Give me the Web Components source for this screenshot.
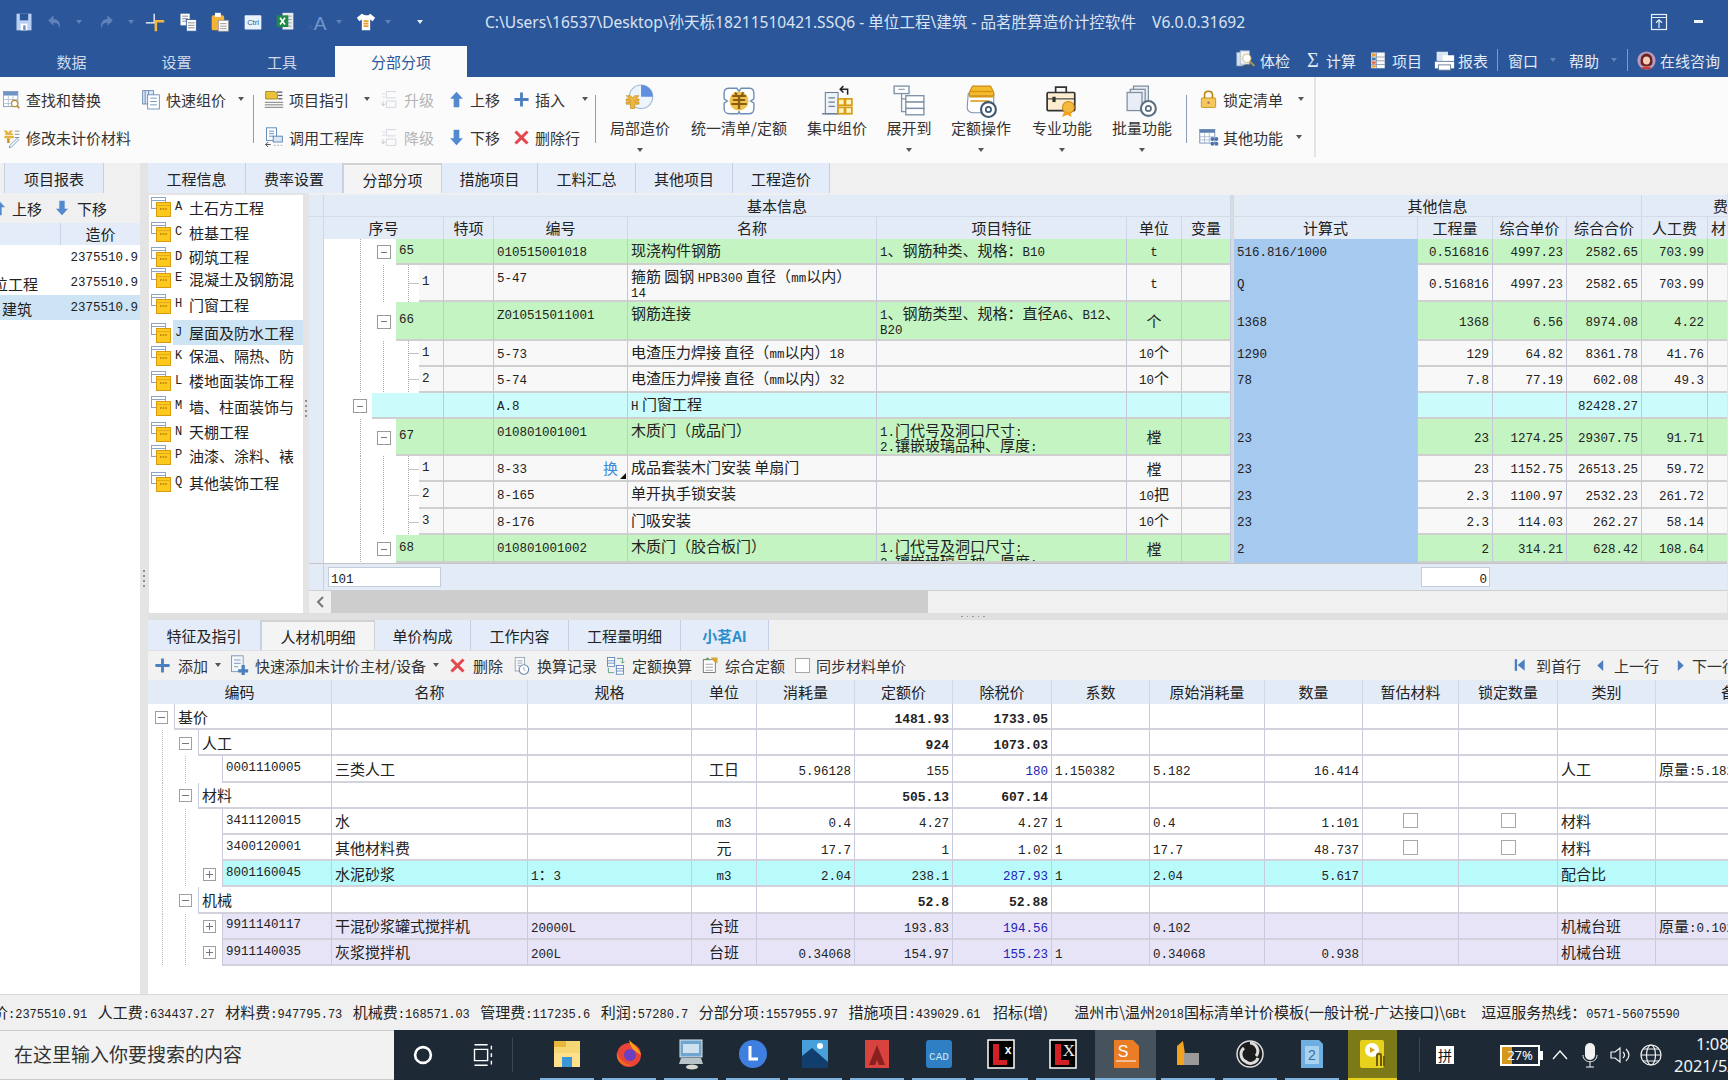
<!DOCTYPE html>
<html lang="zh-CN">
<head>
<meta charset="utf-8">
<title>品茗胜算造价计控软件</title>
<style>
    html, body { margin: 0; width: 1728px; height: 1080px; overflow: hidden; background: #f0f0f0; }
    body { font: 15px "Noto Sans CJK SC", sans-serif; color: #222; }
    #app { display: flex; flex-direction: column; width: 1728px; height: 1080px; }
    #centro { display: flex; height: 831px; background: #e4e4e4; }
    #derecha { width: 1580px; display: flex; flex-direction: column; }
    #medio { display: flex; height: 420px; background: #e4e4e4; }
</style>
</head>
<body>
<div id="app">
    <title-bar></title-bar>
    <rib-bar></rib-bar>
    <div id="centro">
        <left-panel></left-panel>
        <v-split w="8"></v-split>
        <div id="derecha">
            <tab-strip h="30" pad="0">
                <tab-item w="98">工程信息</tab-item>
                <tab-item w="97">费率设置</tab-item>
                <tab-item w="99" active>分部分项</tab-item>
                <tab-item w="96">措施项目</tab-item>
                <tab-item w="98">工料汇总</tab-item>
                <tab-item w="97">其他项目</tab-item>
                <tab-item w="97">工程造价</tab-item>
            </tab-strip>
            <div id="medio">
                <part-tree></part-tree>
                <v-split w="6" top="10"></v-split>
                <bill-grid></bill-grid>
            </div>
            <h-split></h-split>
            <detail-panel></detail-panel>
        </div>
    </div>
    <status-bar></status-bar>
    <task-bar></task-bar>
</div>

<script>
const ICONS = {
    save: '<rect x="3" y="2" width="18" height="20" fill="#b9d0f2"/><rect x="7" y="2" width="10" height="8" fill="#2b579a"/><rect x="8" y="14" width="8" height="8" fill="#fff"/><rect x="11" y="16" width="3" height="6" fill="#6f94cc"/>',
    undo: '<path d="M10 3 3 10l7 7v-4c4 0 7 1 8 8 2-7-1-13-8-13z" fill="#5f82b8"/>',
    redo: '<path d="M14 3l7 7-7 7v-4c-4 0-7 1-8 8-2-7 1-13 8-13z" fill="#5f82b8"/>',
    cross: '<path d="M1 13h10V2" fill="none" stroke="#fff" stroke-width="1.500"/><path d="M23 11H13v12" fill="none" stroke="#f6b73c" stroke-width="3"/>',
    copy: '<rect x="3" y="2" width="11" height="14" fill="#fff"/><path d="M5 5h7M5 8h7M5 11h7" stroke="#777"/><rect x="10" y="9" width="12" height="14" fill="#fff" stroke="#2b579a"/><path d="M12 13h8M12 16h8M12 19h8" stroke="#777"/>',
    paste: '<rect x="2" y="4" width="15" height="18" rx="2" fill="#f5b335"/><rect x="6" y="1" width="7" height="5" fill="#fff"/><rect x="10" y="10" width="12" height="13" fill="#fff" stroke="#999"/><path d="M12 14h8M12 17h8M12 20h8" stroke="#888"/>',
    ctrl: '<rect x="2" y="4" width="20" height="17" rx="1" fill="#e9f2fb"/><text x="12" y="16" font-size="9" text-anchor="middle" fill="#2b579a" font-family="Liberation Sans">Ctrl</text>',
    excel: '<rect x="9" y="1" width="13" height="20" fill="#e9ecef"/><path d="M12 5h8M12 9h8M12 13h8M12 17h8" stroke="#8c9aa8"/><rect x="2" y="4" width="14" height="14" fill="#1e8a45"/><path d="M6 7l6 8M12 7l-6 8" stroke="#fff" stroke-width="2"/>',
    aa: '<text x="0" y="21" font-size="11" fill="#3f689f" font-family="Liberation Sans">A</text><text x="8" y="21" font-size="23" fill="#7397cf" font-family="Liberation Sans">A</text>',
    shirt: '<path d="M7 2 1 7l3 4 3-2v13h10V9l3 2 3-4-6-5-2 2h-4z" fill="#fff"/><path d="M9 11h6M9 14h6M9 17h6" stroke="#f39a2a" stroke-width="2"/>',
    find: '<rect x="2" y="2" width="18" height="19" fill="#fff" stroke="#7d93b3"/><rect x="2" y="2" width="18" height="5" fill="#6e93c8"/><path d="M8 7v14M14 7v14M2 12h18M2 17h18" stroke="#a9b9cf"/><circle cx="16" cy="17" r="4" fill="#fff" stroke="#b98a2a" stroke-width="1.5"/><path d="m19 20 3 3" stroke="#b98a2a" stroke-width="2"/>',
    price: '<path d="M2 3h4l2 3 2-3h4l-3 4h3v2H4V7h1z M3 10h12v3H3z" fill="#e4b23e"/><path d="M8 13v6" stroke="#c98f1d" stroke-width="3"/><path d="M16 4h6M16 8h6M16 12h6" stroke="#777"/><path d="m10 22 9-9 2 2-9 9-3 1z" fill="#fff" stroke="#5b84bd"/>',
    quick: '<rect x="2" y="2" width="13" height="16" fill="#dbe7f5" stroke="#5f7fa8"/><path d="M5 2v16M9 2v16" stroke="#5f7fa8"/><rect x="8" y="7" width="14" height="17" fill="#fff" stroke="#5b84bd"/><path d="M11 11h8M11 15h8M11 19h8" stroke="#5b84bd"/>',
    guide: '<path d="M2 3h11l3 3v6H2z" fill="#e9c23c" stroke="#9a7b16"/><rect x="15" y="3" width="7" height="1.5" fill="#555"/><rect x="17" y="7" width="5" height="1.5" fill="#555"/><rect x="17" y="11" width="5" height="1.5" fill="#555"/><path d="M1 16h22M1 19h22M1 22h22" stroke="#666"/>',
    lib: '<rect x="3" y="1" width="12" height="15" fill="#fff" stroke="#4a78b3"/><path d="M6 5h6M6 8h6M6 11h6" stroke="#4a78b3"/><rect x="11" y="11" width="11" height="7" fill="#dbe7f5" stroke="#4a78b3"/><path d="M2 21h6m-3-3-3 3 3 3" stroke="#333" fill="none"/><path d="M12 22h10" stroke="#999" stroke-dasharray="2 2"/>',
    up: '<path d="M12 1 3 11h5v12h8V11h5z" fill="#5389cf"/>',
    down: '<path d="M12 23 3 13h5V1h8v12h5z" fill="#5389cf"/>',
    plus: '<path d="M10 2h4v8h8v4h-8v8h-4v-8H2v-4h8z" fill="#4c7fc0"/>',
    del: '<path d="m5 2 7 7 7-7 3 3-7 7 7 7-3 3-7-7-7 7-3-3 7-7-7-7z" fill="#e2484d"/>',
    lift: '<g fill="none" stroke="#c9ced6"><path d="M8 2h12M8 2v8h12M3 5h3M3 9h3M8 14h12v8H8zM3 18h3"/></g><path d="M4 14v6m-3-3 3 3 3-3" stroke="#c3cad4" fill="none"/>',
    pie: '<circle cx="17" cy="12" r="11" fill="#eef4fb" stroke="#9fb6d3"/><path d="M17 12V1a11 11 0 0 1 11 11z" fill="#5f8fe0"/><path d="M3 11h4l2 2 2-2h4l-3 3h3v2h-4v1h4v2h-4v4H7v-4H3v-2h4v-1H3v-2h3z" fill="#eeb63d" stroke="#bf8718" stroke-width=".6"/>',
    clover: '<path d="M6 4h8l2 3 2-3h8c3 0 4 2 4 5v5l-3 2 3 2v5c0 3-2 5-5 5h-8l-1-2-1 2H7c-3 0-5-2-5-5v-5l3-2-3-2V9c0-3 1-5 4-5z" fill="#fff" stroke="#6d8fb7" stroke-width="1.3"/><ellipse cx="16" cy="16" rx="9" ry="9" fill="#f1c24d"/><text x="16" y="22" font-size="16" font-weight="700" text-anchor="middle" fill="#8a5d10" font-family="Noto Sans CJK SC">羊</text>',
    build: '<rect x="5" y="8" width="12" height="20" fill="#eef3f9" stroke="#6c8199"/><path d="M8 13h6M8 17h6M8 21h6M2 28h16" stroke="#6c8199" stroke-width="1.2"/><g fill="#fff3c4" stroke="#d99c12" stroke-width="1.6"><rect x="17" y="14" width="6" height="6"/><rect x="24" y="14" width="6" height="6"/><rect x="17" y="22" width="6" height="6"/><rect x="24" y="22" width="6" height="6"/></g><path d="M26 10V5h-7m3-3-3 3 3 3" fill="none" stroke="#222" stroke-width="1.4"/>',
    expand: '<g fill="#fff" stroke="#7f93a9" stroke-width="1.3"><rect x="2" y="2" width="14" height="7"/><rect x="13" y="11" width="17" height="6"/><rect x="13" y="17" width="17" height="6"/><rect x="13" y="23" width="17" height="6"/></g><path d="M6 5h6" stroke="#7f93a9"/><path d="M9 9v17h4M9 14h4" fill="none" stroke="#7f93a9" stroke-width="1.2"/>',
    quota: '<path d="M4 9h24v13a5 5 0 0 1-5 5H8a5 5 0 0 1-5-5z" fill="#fff" stroke="#7f93a9"/><path d="M8 2h17l3 6v3H5V8z" fill="#f4bb2c" stroke="#c88a12"/><path d="M6 7h21M5 12h23M6 16h18" stroke="#d9960f" stroke-width="1.4"/><circle cx="23" cy="24" r="7" fill="#fff" stroke="#3f5870" stroke-width="2"/><circle cx="23" cy="24" r="2.5" fill="#fff" stroke="#3f5870" stroke-width="1.6"/>',
    case: '<rect x="2" y="8" width="26" height="17" rx="1" fill="#fdeccf" stroke="#333" stroke-width="1.6"/><path d="M10 8V3h10v5" fill="none" stroke="#333" stroke-width="1.6"/><path d="M2 14h26" stroke="#333"/><rect x="7" y="12" width="3" height="5" fill="#333"/><circle cx="22" cy="22" r="5.5" fill="#f5b93d" stroke="#d18a10"/><path d="m18 26-2 5 5-2 4 2-1-5" fill="#f0a11f"/>',
    batch: '<g fill="#e9eef6" stroke="#80909f" stroke-width="1.2"><rect x="8" y="2" width="14" height="17"/><rect x="5" y="5" width="14" height="17"/><rect x="2" y="8" width="14" height="17"/></g><circle cx="22" cy="23" r="7" fill="#fff" stroke="#5c6f80" stroke-width="2"/><circle cx="22" cy="23" r="2.5" fill="#fff" stroke="#5c6f80" stroke-width="1.6"/>',
    lock: '<path d="M7 10V6c0-6 10-6 10 0v4" fill="none" stroke="#b8860b" stroke-width="2"/><rect x="3" y="10" width="18" height="12" rx="1" fill="#f6c95c" stroke="#b8860b"/><circle cx="12" cy="16" r="1.5" fill="#a66"/>',
    other: '<rect x="1" y="2" width="19" height="17" fill="#fff" stroke="#5d7fb0"/><rect x="1" y="2" width="19" height="4" fill="#5d7fb0"/><path d="M7 6v13M13 6v13M1 11h19M1 15h19" stroke="#9fb3cd"/><g fill="#4d74ad"><circle cx="17" cy="14" r="2.5"/><circle cx="22" cy="14" r="2.5"/><circle cx="17" cy="20" r="2.5"/><circle cx="22" cy="20" r="2.5"/></g>',
    check: '<rect x="1" y="3" width="11" height="16" fill="#dce6f2" stroke="#9fb0c6"/><rect x="5" y="1" width="11" height="16" fill="#eef3f8" stroke="#9fb0c6"/><circle cx="13" cy="10" r="5" fill="#fff" stroke="#d5b05c"/><path d="M7 21c0-5 12-5 12 0z" fill="#39557b"/><path d="m17 14 5 5" stroke="#c99a36" stroke-width="2"/>',
    proj: '<rect x="3" y="2" width="18" height="21" fill="#f7f7f7"/><path d="M3 8h18M3 13h18M3 18h18M10 2v21" stroke="#7d8fa3"/><rect x="4" y="3" width="5" height="4" fill="#eb9e37"/><rect x="4" y="9" width="5" height="3" fill="#4a78b3"/><rect x="4" y="14" width="5" height="3" fill="#e25d3c"/><rect x="4" y="19" width="5" height="3" fill="#eb9e37"/>',
    print: '<rect x="3" y="2" width="13" height="12" fill="#dbe6f3"/><rect x="10" y="6" width="13" height="7" fill="#fff"/><rect x="1" y="13" width="22" height="8" fill="#fff"/><rect x="5" y="17" width="14" height="6" fill="#fff" stroke="#5f7594"/><path d="M1 13h22" stroke="#5f7594"/>',
    avatar: '<circle cx="12" cy="12" r="11.500" fill="#b99bbd"/><path d="M5 17C3 8 7 3 12 3s9 5 7 14l-3 2H8z" fill="#6b231d"/><ellipse cx="12" cy="12" rx="4.500" ry="5" fill="#f3cdb8"/><path d="M5 23c2-5 12-5 14 0z" fill="#c8403a"/>',
    restore: '<rect x="2" y="2" width="20" height="20" fill="none" stroke="#e8eef7" stroke-width="1.6"/><path d="M2 6h20M12 20V9m-4 4 4-4 4 4" fill="none" stroke="#e8eef7" stroke-width="1.6"/>',
    addmat: '<rect x="3" y="1" width="14" height="19" fill="#f2f6fb" stroke="#6f8cae"/><path d="M6 6h8M6 10h8M6 14h5" stroke="#6f8cae"/><path d="M15 12h4v5h4v4h-4v3h-4v-3h-4v-4h4z" fill="#4c7fc0"/>',
    log: '<rect x="4" y="2" width="12" height="17" fill="#f6f8fb" stroke="#8b99aa"/><path d="M7 6h6M7 9h6M7 12h3" stroke="#8b99aa"/><circle cx="15" cy="17" r="6" fill="#fff" stroke="#6c88ad" stroke-width="1.4"/><path d="M15 14v3l2 2" stroke="#6c88ad" fill="none"/>',
    conv: '<rect x="2" y="2" width="9" height="11" fill="#fff" stroke="#4a78b3"/><path d="M2 6h9M2 9h9" stroke="#4a78b3"/><rect x="13" y="12" width="9" height="11" fill="#fff" stroke="#4a78b3"/><path d="M13 16h9M13 19h9" stroke="#4a78b3"/><path d="M14 3h7v6m-2-2 2 2 2-2M10 21H3v-6" fill="none" stroke="#3f8f6a"/>',
    synth: '<rect x="3" y="5" width="16" height="17" fill="#fff" stroke="#555"/><path d="M6 11h10M6 15h10M6 19h10" stroke="#888"/><path d="M13 2h9v8l-5-3z" fill="#d7a730"/><path d="M4 5l5-3 3 3" fill="#5b9a4a"/>',
    first: '<rect x="3" y="2" width="4" height="20" fill="#4c7fc0"/><path d="M20 2v20L8 12z" fill="#4c7fc0"/>',
    prev: '<path d="M17 2v20L6 12z" fill="#4c7fc0"/>',
    next: '<path d="M7 2v20l11-10z" fill="#4c7fc0"/>',
    folder: '<rect x=".5" y=".5" width="14" height="11" fill="#fff" stroke="#8ea4c4"/><path d="M.5 3.500h14" stroke="#8ea4c4"/><rect x="5.500" y="5.500" width="14" height="14" fill="#fcc91c" stroke="#d99a10"/><path d="M5.500 8.500h14" stroke="#e6a919"/><path d="M9 12h7" stroke="#b67711" stroke-width="1.6" stroke-dasharray="1.600 1"/>'
};

const TASK_ICONS = {
    cortana: '<circle cx="16" cy="16" r="9" fill="none" stroke="#fff" stroke-width="3"/>',
    view: '<path d="M8 5h14M8 27h14M8 10h14v12H8zM26 6v4M26 14v4M26 22v4" fill="none" stroke="#fff" stroke-width="1.5"/>',
    explorer: '<rect x="3" y="3" width="26" height="26" fill="#f7d774"/><rect x="3" y="3" width="12" height="6" fill="#e8b83d"/><rect x="3" y="15" width="26" height="14" fill="#ffe08a"/><rect x="11" y="19" width="10" height="10" fill="#3b96d8"/>',
    firefox: '<circle cx="16" cy="17" r="12" fill="#e8443a"/><path d="M16 2c4 4 10 8 12 15l-6-4c-3-2-5-6-6-11z" fill="#f9a01b"/><circle cx="17" cy="17" r="6" fill="#6a3fc0"/><path d="M4 14c2 8 8 13 16 13-8 3-18-3-16-13z" fill="#f46d1b"/>',
    keyb: '<rect x="5" y="2" width="22" height="17" fill="#6fa6cf" stroke="#dfe7ee"/><rect x="8" y="6" width="16" height="9" fill="#cfe1ef"/><path d="M6 20h20l2 6H4z" fill="#b8c2c9"/><ellipse cx="17" cy="29" rx="6" ry="2.500" fill="#d8d8d0"/>',
    clock: '<circle cx="16" cy="16" r="14" fill="#3f7fe0"/><path d="M13 8v13h8" fill="none" stroke="#fff" stroke-width="3"/>',
    photo: '<rect x="3" y="2" width="26" height="28" fill="#47a0da"/><path d="M3 30V18l10-8 16 14v6z" fill="#123e6e"/><circle cx="21" cy="8" r="3" fill="#fff"/>',
    acad: '<path d="M4 2h24v28H4z" fill="#d8433f"/><path d="M16 7l8 20h-6l-2-5-2 5H8z" fill="#8a1f1f"/>',
    cad: '<rect x="3" y="2" width="26" height="28" rx="3" fill="#2e7fc4"/><text x="16" y="22" font-size="11" text-anchor="middle" fill="#cfe6f6" font-family="Liberation Mono">CAD</text>',
    lx1: '<rect x="3" y="2" width="26" height="28" fill="#000" stroke="#fff" stroke-width="1.5"/><path d="M8 6h6v16h8v5H8z" fill="#d32027"/><text x="23" y="16" font-size="12" font-weight="700" text-anchor="middle" fill="#fff" font-family="Liberation Sans">x</text>',
    lx2: '<rect x="3" y="2" width="26" height="28" fill="#000" stroke="#fff" stroke-width="1.5"/><path d="M8 6h6v16h8v5H8z" fill="#d32027"/><text x="22" y="18" font-size="17" text-anchor="middle" fill="#eee" font-family="Liberation Serif">X</text>',
    ssq: '<path d="M4 2h19l6 6v22H4z" fill="#ea7d25"/><text x="13" y="19" font-size="16" text-anchor="middle" fill="#fff" font-family="Liberation Sans">S</text><path d="M6 23h20" stroke="#fff"/>',
    rule: '<path d="M5 27V8l6-5 2 13 14-1v12z" fill="#f1a21f"/><rect x="12" y="15" width="15" height="12" fill="#9a9a9a"/>',
    obs: '<circle cx="16" cy="16" r="13" fill="#1c1c1c" stroke="#ddd" stroke-width="1.5"/><path d="M16 5a8 8 0 0 1 6 13M10 10a8 8 0 0 0 3 14M24 20a8 8 0 0 1-12 4" fill="none" stroke="#ddd" stroke-width="3"/>',
    blue: '<path d="M5 2h18l4 4v24H5z" fill="#6eaee0"/><path d="M9 8h14v18H9z" fill="#a9d2ee"/><text x="16" y="22" font-size="14" text-anchor="middle" fill="#2e6ea3" font-family="Liberation Sans">2</text>',
    plug: '<rect x="3" y="2" width="24" height="28" rx="2" fill="#e8d11d"/><circle cx="15" cy="12" r="7" fill="#fff"/><path d="M13 9v6l5-3z" fill="#d4a017"/><path d="M20 28V18c0-3 4-3 4 0v10M27 28V18" fill="none" stroke="#6b5a10" stroke-width="2"/>'
};

// parte latina en fuente fija, como el grid original
const mono = (t) => String(t == null ? '' : t)
    .split('|')
    .map((l) => l.replace(/[\x21-\x7e]+/g, (s) => `<span class="m">${s}</span>`))
    .join('<br>');
const MONO = `.m { font: 12.5px/1 "Liberation Mono", monospace; }`;


customElements.define('x-icon', class extends HTMLElement {
    constructor() {
        super();
        this.attachShadow({ mode: 'open' });
    }

    connectedCallback() {
        const size = this.getAttribute('size') || 18;
        const vb = this.getAttribute('vb') || 24;
        this.shadowRoot.innerHTML = `
            <style>
                :host { display: inline-flex; flex: none; width: ${size}px; height: ${size}px; }
                svg { width: 100%; height: 100%; overflow: visible; }
            </style>
            <svg viewBox="0 0 ${vb} ${vb}">${ICONS[this.getAttribute('name')] || ''}</svg>`;
    }
});

customElements.define('x-caret', class extends HTMLElement {
    constructor() {
        super();
        this.attachShadow({ mode: 'open' });
    }

    connectedCallback() {
        const color = this.getAttribute('color') || '#555';
        this.shadowRoot.innerHTML = `
            <style>
                :host { display: inline-block; flex: none; width: 0; height: 0;
                    border: 3.5px solid transparent; border-top: 4px solid ${color}; border-bottom: 0; }
            </style>`;
    }
});

customElements.define('v-split', class extends HTMLElement {
    constructor() {
        super();
        this.attachShadow({ mode: 'open' });
    }

    connectedCallback() {
        this.shadowRoot.innerHTML = `
            <style>
                :host { display: flex; flex-direction: column; align-items: center; justify-content: center; flex: none;
                    width: ${this.getAttribute('w')}px; padding-top: ${this.getAttribute('top') || 0}px; box-sizing: border-box; }
                i { width: 2px; height: 2px; background: #8f8f8f; margin: 1.500px 0; }
            </style>
            <i></i><i></i><i></i><i></i>`;
    }
});

customElements.define('title-bar', class extends HTMLElement {
    constructor() {
        super();
        this.attachShadow({ mode: 'open' });
    }

    connectedCallback() {
        this.shadowRoot.innerHTML = `
            <style>
                :host { display: block; height: 77px; background: #2b579a; color: #dbe4f2; flex: none; }
                #t1 { height: 46px; box-sizing: border-box; padding-bottom: 3px; display: flex; align-items: center; }
                #quick { display: flex; align-items: center; width: 485px; flex: none; padding-left: 14px; box-sizing: border-box; }
                #title { font: 15.550px "Noto Sans", "Noto Sans CJK SC", sans-serif; white-space: pre; width: 1165px; flex: none; }
                #win { display: flex; align-items: center; }
                #t2 { height: 31px; display: flex; align-items: flex-end; }
                .tab { width: 105px; height: 31px; line-height: 31px; text-align: center; font-size: 15px; color: #cfd9ea; }
                .act { width: 132px; background: #fbfbfb; color: #2b579a; }
                #right { margin-left: auto; display: flex; align-items: center; height: 34px; margin-top: -3px; padding-right: 8px; font-size: 15px; color: #e4eaf4; align-self: flex-end; }
                .top { display: inline-flex; align-items: center; }
                .bar { width: 1px; height: 22px; background: #7f9cc6; }
                .sigma { font: 20px "Liberation Serif", serif; width: 14px; text-align: center; }
            </style>
            <div id="t1">
                <div id="quick">
                    <x-icon name="save" size="20"></x-icon>
                    <x-icon name="undo" size="18" style="margin-left:12px"></x-icon>
                    <x-caret color="#5f82b8" style="margin-left:12px"></x-caret>
                    <x-icon name="redo" size="18" style="margin-left:14.500px"></x-icon>
                    <x-caret color="#5f82b8" style="margin-left:13px"></x-caret>
                    <x-icon name="cross" size="20" style="margin-left:11.500px"></x-icon>
                    <x-icon name="copy" size="20" style="margin-left:13px"></x-icon>
                    <x-icon name="paste" size="20" style="margin-left:12px"></x-icon>
                    <x-icon name="ctrl" size="20" style="margin-left:13px"></x-icon>
                    <x-icon name="excel" size="20" style="margin-left:12px"></x-icon>
                    <x-icon name="aa" size="20" style="margin-left:12px"></x-icon>
                    <x-caret color="#5f82b8" style="margin-left:8.500px"></x-caret>
                    <x-icon name="shirt" size="20" style="margin-left:14.500px"></x-icon>
                    <x-caret color="#5f82b8" style="margin-left:8.500px"></x-caret>
                    <x-caret color="#e8eef7" style="margin-left:26px"></x-caret>
                </div>
                <div id="title">C:\\Users\\16537\\Desktop\\孙天栎18211510421.SSQ6 - 单位工程\\建筑 - 品茗胜算造价计控软件    V6.0.0.31692</div>
                <div id="win">
                    <x-icon name="restore" size="18"></x-icon>
                    <span style="width:9px;height:3px;background:#f2f5fa;margin-left:26px"></span>
                </div>
            </div>
            <div id="t2">
                <span style="width:19px"></span>
                <div class="tab">数据</div><div class="tab">设置</div><div class="tab" style="width:106px">工具</div>
                <div class="tab act">分部分项</div>
                <div id="right">
                    <a class="top" style="gap:4px"><x-icon name="check" size="20"></x-icon><span>体检</span></a>
                    <a class="top" style="gap:6px;margin-left:16px"><span class="sigma">Σ</span><span>计算</span></a>
                    <a class="top" style="gap:5px;margin-left:13px"><x-icon name="proj" size="18"></x-icon><span>项目</span></a>
                    <a class="top" style="gap:3px;margin-left:12px"><x-icon name="print" size="21"></x-icon><span>报表</span></a>
                    <span class="bar" style="margin-left:9px"></span>
                    <a class="top" style="gap:12px;margin-left:10px">窗口<x-caret color="#5f82b8"></x-caret></a>
                    <a class="top" style="gap:12px;margin-left:13px">帮助<x-caret color="#5f82b8"></x-caret></a>
                    <span class="bar" style="margin-left:10px"></span>
                    <a class="top" style="gap:4px;margin-left:9px"><x-icon name="avatar" size="19"></x-icon><span>在线咨询</span></a>
                </div>
            </div>`;
    }
});

customElements.define('tool-item', class extends HTMLElement {
    constructor() {
        super();
        this.attachShadow({ mode: 'open' });
    }

    connectedCallback() {
        const off = this.hasAttribute('off');
        const caret = this.getAttribute('caret');
        this.shadowRoot.innerHTML = `
            <style>
                :host { display: flex; align-items: center; height: 38px; gap: 5px; white-space: nowrap;
                    font-size: 15px; color: ${off ? '#b4b4b4' : '#333'}; }
                x-caret { margin-left: ${caret || 0}px; }
            </style>
            <x-icon name="${this.getAttribute('icon')}" size="${this.getAttribute('size') || 19}"></x-icon>
            <slot></slot>
            ${caret ? '<x-caret></x-caret>' : ''}`;
    }
});

customElements.define('big-button', class extends HTMLElement {
    constructor() {
        super();
        this.attachShadow({ mode: 'open' });
    }

    connectedCallback() {
        this.shadowRoot.innerHTML = `
            <style>
                :host { display: flex; flex-direction: column; align-items: center; flex: none;
                    width: ${this.getAttribute('w')}px; padding-top: 7px; font-size: 15px; color: #333; white-space: nowrap; }
                #tx { height: 24px; line-height: 24px; margin-top: -2px; }
                x-caret { margin-top: 8px; }
            </style>
            <x-icon name="${this.getAttribute('icon')}" size="34" vb="32"></x-icon>
            <div id="tx"><slot></slot></div>
            ${this.hasAttribute('nocaret') ? '' : '<x-caret></x-caret>'}`;
    }
});

customElements.define('rib-bar', class extends HTMLElement {
    constructor() {
        super();
        this.attachShadow({ mode: 'open' });
    }

    connectedCallback() {
        this.shadowRoot.innerHTML = `
            <style>
                :host { display: flex; height: 86px; flex: none; background: #fbfbfb; }
                .col { padding-top: 3px; flex: none; }
                .sep { width: 1px; height: 48px; background: #8c9fb8; margin-top: 18px; flex: none; }
                #end { width: 2px; height: 80px; background: #e4e4e4; margin-left: 10px; flex: none; }
            </style>
            <div class="col" style="width:141px;padding-left:2px;box-sizing:border-box">
                <tool-item icon="find">查找和替换</tool-item>
                <tool-item icon="price">修改未计价材料</tool-item>
            </div>
            <div class="col" style="width:112px"><tool-item icon="quick" size="20" caret="7">快速组价</tool-item></div>
            <div class="sep"></div>
            <div class="col" style="width:116px;margin-left:10px;box-sizing:border-box">
                <tool-item icon="guide" size="20" caret="10">项目指引</tool-item>
                <tool-item icon="lib" size="20">调用工程库</tool-item>
            </div>
            <div class="col" style="width:68px">
                <tool-item icon="lift" off>升级</tool-item>
                <tool-item icon="lift" off>降级</tool-item>
            </div>
            <div class="col" style="width:65px">
                <tool-item icon="up" size="17">上移</tool-item>
                <tool-item icon="down" size="17">下移</tool-item>
            </div>
            <div class="col" style="width:82px">
                <tool-item icon="plus" size="17" caret="12">插入</tool-item>
                <tool-item icon="del" size="17">删除行</tool-item>
            </div>
            <div class="sep"></div>
            <span style="width:5px"></span>
            <big-button icon="pie" w="78">局部造价</big-button>
            <big-button icon="clover" w="120" nocaret>统一清单/定额</big-button>
            <big-button icon="build" w="76" nocaret>集中组价</big-button>
            <big-button icon="expand" w="68">展开到</big-button>
            <big-button icon="quota" w="76">定额操作</big-button>
            <big-button icon="case" w="86">专业功能</big-button>
            <big-button icon="batch" w="74">批量功能</big-button>
            <span style="width:7px"></span>
            <div class="sep"></div>
            <div class="col" style="margin-left:12px">
                <tool-item icon="lock" caret="10">锁定清单</tool-item>
                <tool-item icon="other" caret="8">其他功能</tool-item>
            </div>
            <div id="end"></div>`;
    }
});

customElements.define('tab-item', class extends HTMLElement {
    constructor() {
        super();
        this.attachShadow({ mode: 'open' });
    }

    connectedCallback() {
        const on = this.hasAttribute('active');
        this.shadowRoot.innerHTML = `
            <style>
                :host { display: flex; align-items: center; justify-content: center; box-sizing: border-box; flex: none;
                    width: ${this.getAttribute('w')}px; height: 100%; font-size: 15px; white-space: nowrap;
                    color: ${this.getAttribute('color') || '#222'};
                    font-weight: ${this.hasAttribute('bold') ? 700 : 400};
                    background: ${on ? '#f4f4f4' : '#e3ecf8'};
                    border-right: 1px solid #c4d0e2;
                    ${on ? 'border-top:2px solid #d2d2d2;border-left:1px solid #d2d2d2;border-right:1px solid #d2d2d2;' : ''} }
            </style>
            <slot></slot>`;
    }
});

customElements.define('tab-strip', class extends HTMLElement {
    constructor() {
        super();
        this.attachShadow({ mode: 'open' });
    }

    connectedCallback() {
        this.shadowRoot.innerHTML = `
            <style>
                :host { display: flex; flex: none; height: ${this.getAttribute('h') || 30}px;
                    padding-left: ${this.getAttribute('pad') || 0}px; background: #f0f0f0; box-sizing: border-box; }
            </style>
            <slot></slot>`;
    }
});

customElements.define('left-panel', class extends HTMLElement {
    constructor() {
        super();
        this.attachShadow({ mode: 'open' });
    }

    connectedCallback() {
        const rows = [['', '2375510.9'], ['单位工程', '2375510.9'], ['建筑', '2375510.9', 1]];
        this.shadowRoot.innerHTML = `
            <style>
                :host { display: flex; flex-direction: column; width: 140px; flex: none; background: #fff; overflow: hidden; }
                ${MONO}
                #tools { height: 30px; background: #f0f0f0; display: flex; align-items: center; font-size: 15px; flex: none; }
                #tools span { margin-right: 12px; }
                #tools x-icon { margin-right: 7px; }
                #head { height: 22px; display: grid; grid-template-columns: 60px 80px; background: #e3ecf8; text-align: center; line-height: 22px; flex: none; }
                #head div + div { border-left: 1px solid #c9d3e3; }
                .row { display: grid; grid-template-columns: 60px 80px; height: 25px; overflow: hidden; white-space: nowrap; }
                .row .v { text-align: right; padding-right: 2px; line-height: 20px; }
                .row .n { margin-left: var(--i); line-height: 28px; }
                .sel { background: #cde4f5; }
            </style>
            <tab-strip h="30"><tab-item w="100" style="margin-left:4px;border-left:1px solid #c4d0e2">项目报表</tab-item></tab-strip>
            <div id="tools">
                <x-icon name="up" size="16" style="margin-left:-9px;margin-right:5px"></x-icon><span>上移</span>
                <x-icon name="down" size="16"></x-icon><span>下移</span>
            </div>
            <div id="head"><div></div><div>造价</div></div>
            ${rows.map((r, i) => `<div class="row ${r[2] ? 'sel' : ''}">
                <div class="n" style="--i:${i == 1 ? -22 : 2}px">${r[0]}</div><div class="v">${mono(r[1])}</div></div>`).join('')}`;
    }
});

customElements.define('part-tree', class extends HTMLElement {
    constructor() {
        super();
        this.attachShadow({ mode: 'open' });
    }

    connectedCallback() {
        const items = [
            ['A', '土石方工程', 24], ['C', '桩基工程', 26], ['D', '砌筑工程', 23], ['E', '混凝土及钢筋混', 20],
            ['H', '门窗工程', 32], ['J', '屋面及防水工程', 25, 1], ['K', '保温、隔热、防', 21], ['L', '楼地面装饰工程', 29],
            ['M', '墙、柱面装饰与', 22], ['N', '天棚工程', 29], ['P', '油漆、涂料、裱', 18], ['Q', '其他装饰工程', 36]
        ];
        this.shadowRoot.innerHTML = `
            <style>
                :host { display: block; width: 154px; margin: 2px 0 0 1px; flex: none; background: #fff; overflow: hidden; }
                ${MONO}
                .it { display: flex; align-items: center; padding-left: 2px; white-space: nowrap; }
                x-icon { margin-right: 2px; }
                .tx { flex: 1; display: flex; height: 100%; align-items: center; padding-left: 2px; }
                .m { width: 14px; flex: none; font-size: 12px; }
                .sel .tx { background: #cde4f5; }
            </style>
            ${items.map((i) => `<div class="it ${i[3] ? 'sel' : ''}" style="height:${i[2]}px">
                <x-icon name="folder" size="20" vb="20"></x-icon>
                <div class="tx"><span class="m">${i[0]}</span>${i[1]}</div></div>`).join('')}`;
    }
});

const BILL_COLS = '15px 120px 50px 134px 249px 250px 55px 49px 3px 184px 75px 74px 75px 66px 80px';
const BILL_ROWS = [
    { h: 26, k: 'g', t: 'q', seq: '65', code: '010515001018', name: '现浇构件钢筋', feat: '1、钢筋种类、规格：B10', unit: 't', f: '516.816/1000', q: '0.516816', u: '4997.23', p: '2582.65', l: '703.99' },
    { h: 37, k: 'w', t: 's', seq: '1', code: '5-47', name: '箍筋 圆钢 HPB300 直径（mm以内）|14', unit: 't', f: 'Q', q: '0.516816', u: '4997.23', p: '2582.65', l: '703.99' },
    { h: 39, k: 'g', t: 'q', seq: '66', code: 'Z010515011001', name: '钢筋连接', feat: '1、钢筋类型、规格：直径A6、B12、|B20', unit: '个', f: '1368', q: '1368', u: '6.56', p: '8974.08', l: '4.22' },
    { h: 25.500, k: 'w', t: 's', seq: '1', code: '5-73', name: '电渣压力焊接 直径（mm以内）18', unit: '10个', f: '1290', q: '129', u: '64.82', p: '8361.78', l: '41.76' },
    { h: 26.500, k: 'w', t: 's', seq: '2', code: '5-74', name: '电渣压力焊接 直径（mm以内）32', unit: '10个', f: '78', q: '7.8', u: '77.19', p: '602.08', l: '49.3' },
    { h: 26, k: 'y', t: 'a', seq: '', code: 'A.8', name: 'H 门窗工程', unit: '', f: '', q: '', u: '', p: '82428.27', l: '' },
    { h: 37, k: 'g', t: 'q', seq: '67', code: '010801001001', name: '木质门（成品门）', feat: '1.门代号及洞口尺寸:|2.镶嵌玻璃品种、厚度:', unit: '樘', f: '23', q: '23', u: '1274.25', p: '29307.75', l: '91.71' },
    { h: 26, k: 'w', t: 's', seq: '1', code: '8-33', sw: 1, name: '成品套装木门安装 单扇门', unit: '樘', f: '23', q: '23', u: '1152.75', p: '26513.25', l: '59.72' },
    { h: 27, k: 'w', t: 's', seq: '2', code: '8-165', name: '单开执手锁安装', unit: '10把', f: '23', q: '2.3', u: '1100.97', p: '2532.23', l: '261.72' },
    { h: 26, k: 'w', t: 's', seq: '3', code: '8-176', name: '门吸安装', unit: '10个', f: '23', q: '2.3', u: '114.03', p: '262.27', l: '58.14' },
    { h: 28, k: 'g', t: 'q', seq: '68', code: '010801001002', name: '木质门（胶合板门）', feat: '1.门代号及洞口尺寸:|2.镶嵌玻璃品种、厚度:', unit: '樘', f: '2', q: '2', u: '314.21', p: '628.42', l: '108.64' }
];

customElements.define('bill-grid', class extends HTMLElement {
    constructor() {
        super();
        this.attachShadow({ mode: 'open' });
    }

    seqCell(r) {
        const width = { q: 72, s: 95, a: 48 }[r.t];
        const dots = (x) => `linear-gradient(#aaa 50%, transparent 50%) ${x}px 0/1px 2px repeat-y`;
        const lines = r.t == 's'
            ? [dots(36), dots(59), dots(84), `linear-gradient(#c4c4c4, #c4c4c4) 85px 50%/10px 1px no-repeat`]
            : r.t == 'q' ? [dots(36)] : [];
        return `<div class="c seq" style="--w:${width}px">
            <div class="lead" style="background:${lines.join(',') || 'none'}">${r.t == 's' ? '' : '<i class="box"></i>'}</div>
            <div class="fill ${r.k}">${mono(r.seq)}</div></div>`;
    }

    rowHtml(r) {
        const sw = r.sw ? '<b class="sw">换</b><i class="corner"></i>' : '';
        return `<div class="row" style="height:${r.h}px">
            <div class="gut"></div>
            ${this.seqCell(r)}
            <div class="c ${r.k}"></div>
            <div class="c top ${r.k}">${mono(r.code)}${sw}</div>
            <div class="c top ${r.k}">${mono(r.name)}</div>
            <div class="c top feat ${r.k}">${mono(r.feat)}</div>
            <div class="c mid ${r.k}"><span>${mono(r.unit)}</span></div>
            <div class="c ${r.k}"></div>
            <div class="sp"></div>
            <div class="calc"><span>${mono(r.f)}</span></div>
            <div class="c num ${r.k}"><span>${mono(r.q)}</span></div>
            <div class="c num ${r.k}"><span>${mono(r.u)}</span></div>
            <div class="c num ${r.k}"><span>${mono(r.p)}</span></div>
            <div class="c num ${r.k}"><span>${mono(r.l)}</span></div>
            <div class="c ${r.k}"></div>
        </div>`;
    }

    connectedCallback() {
        const heads = ['序号', '特项', '编号', '名称', '项目特征', '单位', '变量'];
        const rest = ['计算式', '工程量', '综合单价', '综合合价', '人工费'];
        this.shadowRoot.innerHTML = `
            <style>
                :host { display: flex; flex-direction: column; width: 1418px; flex: none; overflow: hidden; background: #f0f0f0; }
                ${MONO}
                .row, .hd, .foot { display: grid; grid-template-columns: ${BILL_COLS}; flex: none; }
                #body { height: 324px; flex: none; overflow: hidden; background: #fff; }
                .hd { background: #e3ebf7; text-align: center; font-size: 15px; }
                .hd > div { border-right: 1px solid #cfd8e6; box-sizing: border-box; overflow: hidden; white-space: nowrap; }
                #h1 { height: 21px; line-height: 21px; margin-top: 2px; }
                #h2 { height: 23px; line-height: 21px; border-top: 1px solid #d4dcea; box-sizing: border-box; }
                .gut { background: #e3ebf7; border-right: 1px solid #c6d0e0; }
                .sp { background: #d8dbe0; }
                .c { box-sizing: border-box; border-right: 1px solid #c4c7dc; border-bottom: 2px solid #cfcfcf;
                    overflow: hidden; padding: 0 3px; font-size: 15px; line-height: 15px; display: flex; align-items: center; position: relative; }
                .top { padding-top: 3px; display: block; }
                .top .m { line-height: 0; }
                .mid { justify-content: center; }
                .num { justify-content: flex-end; }
                .feat { white-space: nowrap; }
                .g { background: #c3f4c1; }
                .w { background: #f8f8f8; }
                .y { background: #ccfbfb; }
                .calc { background: #a6c9ef; padding: 0 3px 2px; font-size: 15px; line-height: 15px; display: flex; align-items: center; overflow: hidden; border-right: 1px solid #c4c7dc; box-sizing: border-box; }
                .seq { padding: 0; align-items: stretch; border-bottom: 0; background: #fff; }
                .lead { width: var(--w); flex: none; display: flex; align-items: center; justify-content: flex-end; }
                .box { width: 14px; height: 14px; box-sizing: border-box; border: 1px solid #9a9a9a; background: linear-gradient(#777, #777) center/6px 1px no-repeat #fff; margin-right: 5px; }
                .fill { flex: 1; display: flex; align-items: center; padding-left: 3px; border-bottom: 2px solid #cfcfcf; box-sizing: border-box; }
                .sw { position: absolute; right: 9px; top: 4px; color: #3e8ad8; font-weight: 400; }
                .corner { position: absolute; right: 1px; bottom: 1px; width: 0; height: 0; border-left: 6px solid transparent; border-bottom: 6px solid #111; }
                .foot { height: 28px; background: #e3ebf7; border-top: 1px solid #c4c4c4; border-bottom: 1px solid #cfcfcf; box-sizing: border-box; align-items: center; }
                .foot .inp { display: block; height: 20px; box-sizing: border-box; background: #fff; border: 1px solid #c4ccd8; line-height: 18px; padding: 0 2px; }
                #scroll { display: flex; height: 22px; flex: none; background: #f0f0f0; }
                #arrow { width: 22px; display: flex; align-items: center; justify-content: center; color: #777; }
                #thumb { width: 597px; background: #cdcdcd; }
            </style>
            <div class="hd" id="h1">
                <div style="grid-column:1"></div>
                <div style="grid-column:2/9">基本信息</div>
                <div style="grid-column:9;background:#d8dbe0"></div>
                <div style="grid-column:10/14">其他信息</div>
                <div style="grid-column:14/16;padding-left:12px">费</div>
            </div>
            <div class="hd" id="h2">
                <div></div>
                ${heads.map((h) => `<div>${h}</div>`).join('')}
                <div style="background:#d8dbe0"></div>
                ${rest.map((h) => `<div>${h}</div>`).join('')}
                <div style="text-align:left;padding-left:3px">材</div>
            </div>
            <div id="body">${BILL_ROWS.map((r) => this.rowHtml(r)).join('')}</div>
            <div class="foot">
                <div class="gut" style="height:100%"></div>
                <div style="grid-column:2/4;padding-left:4px"><span class="inp" style="width:113px">${mono('101')}</span></div>
                <div style="grid-column:11;padding:0 3px"><span class="inp" style="text-align:right">${mono('0')}</span></div>
            </div>
            <div id="scroll">
                <div id="arrow"><svg width="9" height="12" viewBox="0 0 9 12"><path d="M7 1 2 6l5 5" fill="none" stroke="#777" stroke-width="2"/></svg></div>
                <div id="thumb"></div>
            </div>`;
    }
});

customElements.define('h-split', class extends HTMLElement {
    constructor() {
        super();
        this.attachShadow({ mode: 'open' });
    }

    connectedCallback() {
        this.shadowRoot.innerHTML = `
            <style>
                :host { display: flex; justify-content: center; align-items: center; height: 7px; flex: none; background: #e0e0e0; padding-left: 70px; box-sizing: border-box; }
                i { width: 1.500px; height: 1.500px; background: #999; margin: 0 2px; }
            </style>
            <i></i><i></i><i></i><i></i><i></i>`;
    }
});

const RES_COLS = '184px 196px 164px 65px 98px 98px 99px 98px 115px 98px 96px 99px 98px 160px';
const CB = '@cb';
const RES_ROWS = [
    ['g1', '基价', '', '', '', '', '*1481.93', '*1733.05'],
    ['g2', '人工', '', '', '', '', '*924', '*1073.03'],
    ['l', '0001110005', '三类人工', '', '工日', '5.96128', '155', '#180', '1.150382', '5.182', '16.414', '', '', '人工', '原量:5.182'],
    ['g2', '材料', '', '', '', '', '*505.13', '*607.14'],
    ['l', '3411120015', '水', '', 'm3', '0.4', '4.27', '4.27', '1', '0.4', '1.101', CB, CB, '材料'],
    ['l', '3400120001', '其他材料费', '', '元', '17.7', '1', '1.02', '1', '17.7', '48.737', CB, CB, '材料'],
    ['p cy', '8001160045', '水泥砂浆', '1：3', 'm3', '2.04', '238.1', '#287.93', '1', '2.04', '5.617', '', '', '配合比'],
    ['g2', '机械', '', '', '', '', '*52.8', '*52.88'],
    ['p vi', '9911140117', '干混砂浆罐式搅拌机', '20000L', '台班', '', '193.83', '#194.56', '', '0.102', '', '', '', '机械台班', '原量:0.102'],
    ['p vi', '9911140035', '灰浆搅拌机', '200L', '台班', '0.34068', '154.97', '#155.23', '1', '0.34068', '0.938', '', '', '机械台班']
];

customElements.define('detail-panel', class extends HTMLElement {
    constructor() {
        super();
        this.attachShadow({ mode: 'open' });
    }

    firstCell(kind, text) {
        const dots = (x) => `linear-gradient(#bbb 50%, transparent 50%) ${x}px 0/1px 2px repeat-y`;
        if (kind == 'g1') return `<div class="c tree"><div class="lead" style="width:26px"><i class="box min"></i></div><div class="fill">${text}</div></div>`;
        if (kind == 'g2') return `<div class="c tree"><div class="lead" style="width:50px;background:${dots(14)}"><i class="box min"></i></div><div class="fill">${text}</div></div>`;
        const box = kind == 'l' ? '' : '<i class="box add"></i>';
        return `<div class="c tree"><div class="lead" style="width:74px;background:${dots(14)},${dots(37)}">${box}</div><div class="fill">${mono(text)}</div></div>`;
    }

    cell(v, i) {
        if (v === undefined) v = '';
        let cls = '';
        if (i == 3) cls = 'mid';
        if (i >= 4 && i <= 6 || i == 9) cls = 'num';
        if (v == CB) return `<div class="c mid"><i class="cb"></i></div>`;
        if (v[0] == '*') return `<div class="c num bold"><span>${mono(v.slice(1))}</span></div>`;
        if (v[0] == '#') return `<div class="c num blue"><span>${mono(v.slice(1))}</span></div>`;
        return `<div class="c ${cls}"><span>${mono(v)}</span></div>`;
    }

    connectedCallback() {
        const heads = ['编码', '名称', '规格', '单位', '消耗量', '定额价', '除税价', '系数', '原始消耗量', '数量', '暂估材料', '锁定数量', '类别'];
        this.shadowRoot.innerHTML = `
            <style>
                :host { display: flex; flex-direction: column; flex: 1; min-height: 0; overflow: hidden; background: #fff; }
                ${MONO}
                #tabs { flex: none; }
                #tools { height: 30px; flex: none; display: flex; align-items: center; padding-bottom: 1px; background: #f2f2f2; font-size: 15px; color: #333; white-space: nowrap; border-top: 1px solid #e0e0e0; box-sizing: border-box; }
                #tools > * { flex: none; }
                .cb { display: inline-block; width: 15px; height: 15px; border: 1px solid #a8a8a8; background: #fff; box-sizing: border-box; }
                #hd, .row { display: grid; grid-template-columns: ${RES_COLS}; flex: none; }
                #hd { height: 24px; line-height: 24px; text-align: center; background: #e3ebf7; }
                #hd div { border-right: 1px solid #cfd8e6; box-sizing: border-box; overflow: hidden; white-space: nowrap; }
                .row { height: 26.200px; }
                .c { box-sizing: border-box; border-right: 1px solid #c8cade; border-bottom: 2px solid #d2d2dc; overflow: hidden; padding: 0 3px;
                    display: flex; align-items: center; white-space: nowrap; font-size: 15px; }
                .mid { justify-content: center; }
                .num { justify-content: flex-end; }
                .bold .m { font-weight: 700; font-size: 13px; }
                .blue { color: #2222b8; }
                .tree { padding: 0; align-items: stretch; border-bottom: 0; }
                .lead { flex: none; display: flex; align-items: center; justify-content: flex-end; }
                .box { width: 13px; height: 13px; box-sizing: border-box; border: 1px solid #a0a0a0; background: #fff; margin-right: 6px; }
                .min { background: linear-gradient(#777, #777) center/7px 1px no-repeat #fff; }
                .add { background: linear-gradient(#777, #777) center/7px 1px no-repeat, linear-gradient(#777, #777) center/1px 7px no-repeat, #fff; }
                .fill { flex: 1; display: flex; align-items: center; padding-left: 3px; border-left: 1px solid #c8cade; border-bottom: 2px solid #d2d2dc; box-sizing: border-box; }
                .cy .c, .cy .fill { background: #b9fbfb; }
                .vi .c, .vi .fill { background: #e7e4f8; }
                .cy .tree, .vi .tree { background: #fff; }
            </style>
            <tab-strip h="30" id="tabs">
                <tab-item w="113">特征及指引</tab-item>
                <tab-item w="114" active>人材机明细</tab-item>
                <tab-item w="96">单价构成</tab-item>
                <tab-item w="98">工作内容</tab-item>
                <tab-item w="112">工程量明细</tab-item>
                <tab-item w="88" color="#2d8ecb" bold>小茗AI</tab-item>
            </tab-strip>
            <div id="tools">
                <x-icon name="plus" size="17" style="margin-left:6px"></x-icon>
                <span style="margin-left:7px">添加</span>
                <x-caret style="margin-left:7px"></x-caret>
                <x-icon name="addmat" size="20" style="margin-left:8px"></x-icon>
                <span style="margin-left:6px">快速添加未计价主材/设备</span>
                <x-caret style="margin-left:7px"></x-caret>
                <x-icon name="del" size="17" style="margin-left:10px"></x-icon>
                <span style="margin-left:7px">删除</span>
                <x-icon name="log" size="19" style="margin-left:9px"></x-icon>
                <span style="margin-left:6px">换算记录</span>
                <x-icon name="conv" size="19" style="margin-left:9px"></x-icon>
                <span style="margin-left:7px">定额换算</span>
                <x-icon name="synth" size="18" style="margin-left:9px"></x-icon>
                <span style="margin-left:6px">综合定额</span>
                <i class="cb" style="margin-left:10px"></i>
                <span style="margin-left:6px">同步材料单价</span>
                <x-icon name="first" size="14" style="margin-left:607px"></x-icon>
                <span style="margin-left:9px">到首行</span>
                <x-icon name="prev" size="13" style="margin-left:13px"></x-icon>
                <span style="margin-left:7px">上一行</span>
                <x-icon name="next" size="13" style="margin-left:15px"></x-icon>
                <span style="margin-left:5px">下一行</span>
            </div>
            <div id="hd">${heads.map((h) => `<div>${h}</div>`).join('')}<div style="text-align:left;padding-left:65px">备</div></div>
            ${RES_ROWS.map((r) => {
                const kind = r[0].split(' ')[0];
                let cells = this.firstCell(kind, r[1]);
                for (let i = 1; i < 14; i++) cells += this.cell(r[i + 1], i);
                return `<div class="row ${r[0]}">${cells}</div>`;
            }).join('')}`;
    }
});

customElements.define('status-bar', class extends HTMLElement {
    constructor() {
        super();
        this.attachShadow({ mode: 'open' });
    }

    connectedCallback() {
        const items = ['价:2375510.91', '人工费:634437.27', '材料费:947795.73', '机械费:168571.03', '管理费:117235.6', '利润:57280.7', '分部分项:1557955.97', '措施项目:439029.61'];
        this.shadowRoot.innerHTML = `
            <style>
                :host { display: flex; align-items: center; height: 36px; flex: none; background: #f0f0f0; border-top: 1px solid #d8d8d8; box-sizing: border-box; padding-bottom: 3px; overflow: hidden; white-space: nowrap; font-size: 15px; color: #222; }
                .m { font: 12px/1 "Liberation Mono", monospace; }
                span.it { margin-right: 10.500px; flex: none; }
            </style>
            <span style="margin-left:-7px"></span>
            ${items.map((t) => `<span class="it">${mono(t)}</span>`).join('')}
            <span class="it" style="margin-left:2px;margin-right:26px">招标(增)</span>
            <span class="it" style="width:403px;overflow:hidden;margin-right:4px">温州市\\温州<span class="m">2018</span>国标清单计价模板(一般计税-广达接口)\\<span class="m">GBt</span></span>
            <span class="it">逗逗服务热线：<span class="m">0571-56075590</span></span>`;
    }
});

customElements.define('task-bar', class extends HTMLElement {
    constructor() {
        super();
        this.attachShadow({ mode: 'open' });
    }

    connectedCallback() {
        // [icono, tipo de fondo, ancho, margen derecho]
        const apps = [
            ['explorer', 1, 54, 8], ['firefox', 1, 54, 8], ['keyb', 1, 54, 8], ['clock', 1, 54, 8], ['photo', 1, 54, 8],
            ['acad', 1, 54, 8], ['cad', 1, 54, 8], ['lx1', 1, 54, 8], ['lx2', 1, 54, 5], ['ssq', 2, 61, 5],
            ['rule', 1, 54, 8], ['obs', 1, 54, 8], ['blue', 1, 54, 9], ['plug', 3, 49, 0]
        ];
        const icon = (n, s) => `<svg width="${s}" height="${s}" viewBox="0 0 32 32">${TASK_ICONS[n]}</svg>`;
        this.shadowRoot.innerHTML = `
            <style>
                :host { display: flex; height: 50px; flex: none; background: #1d2a36; color: #fff; overflow: hidden; white-space: nowrap; }
                :host > * { flex: none; }
                #search { width: 394px; flex: none; background: #f2f2f2; color: #333; font-size: 19px; line-height: 46px; padding-left: 14px; box-sizing: border-box; border-bottom: 1px solid #ccc; border-top: 1px solid #ccc; }
                .gap { flex: none; }
                .sys { flex: none; display: flex; align-items: center; justify-content: center; }
                .app { flex: none; display: flex; align-items: center; justify-content: center; height: 100%; box-sizing: border-box; border-bottom: 2px solid transparent; }
                .a1 { border-bottom-color: #7fb2dc; }
                .a2 { background: #46525c; border-bottom-color: #7fb2dc; }
                .a3 { background: #7c7a18; border-bottom-color: #e8d11d; }
                #sep, #sep2 { width: 1px; height: 34px; background: #3d4852; align-self: center; flex: none; }
                #py { width: 18px; height: 18px; flex: none; background: #fff; color: #111; font-size: 14px; line-height: 18px; text-align: center; align-self: center; margin-left: 16px; }
                #bat { width: 40px; height: 21px; flex: none; align-self: center; margin-left: 46px; box-sizing: border-box; border: 2px solid #fff; font: 13px/17px "Noto Sans", sans-serif; text-align: center; background: linear-gradient(90deg, #d6971d 27%, #1d2a36 27%); position: relative; }
                #bat::after { content: ""; position: absolute; right: -5px; top: 4px; width: 3px; height: 9px; background: #fff; }
                #clock { font: 16.500px/22px "Noto Sans", sans-serif; margin-left: 7px; align-self: center; width: 54px; flex: none; color: #f2f5f7; overflow: hidden; }
                #clock div { white-space: nowrap; text-align: left; }
            </style>
            <div id="search">在这里输入你要搜索的内容</div>
            <div class="sys" style="width:58px">${icon('cortana', 28)}</div>
            <div class="sys" style="width:60px">${icon('view', 30)}</div>
            <div id="sep"></div>
            <span class="gap" style="width:27px"></span>
            ${apps.map((a) => `<div class="app a${a[1]}" style="width:${a[2]}px;margin-right:${a[3]}px">${icon(a[0], 32)}</div>`).join('')}
            <span class="gap" style="width:22px"></span>
            <div id="sep2"></div>
            <div id="py">拼</div>
            <div id="bat">27%</div>
            <div class="sys" style="width:28px;margin-left:6px"><svg width="18" height="12" viewBox="0 0 18 12"><path d="m2 10 7-8 7 8" fill="none" stroke="#fff" stroke-width="1.300"/></svg></div>
            <div class="sys" style="width:30px;margin-left:1px"><svg width="16" height="26" viewBox="0 0 16 26"><rect x="3" y="1" width="10" height="17" rx="5" fill="#f2f2f2"/><path d="M1 13c0 9 14 9 14 0M8 20v5M4 25h8" fill="none" stroke="#f2f2f2"/></svg></div>
            <div class="sys" style="width:30px"><svg width="22" height="20" viewBox="0 0 22 20"><path d="M2 7h4l5-4v14l-5-4H2zM14 7c2 2 2 4 0 6M17 4c4 4 4 8 0 12" fill="none" stroke="#f2f2f2" stroke-width="1.200"/></svg></div>
            <div class="sys" style="width:32px"><svg width="24" height="24" viewBox="0 0 24 24"><g fill="none" stroke="#f2f2f2" stroke-width="1.200"><circle cx="12" cy="12" r="10"/><ellipse cx="12" cy="12" rx="4.500" ry="10"/><path d="M2 12h20M4 6h16M4 18h16"/></g></svg></div>
            <div id="clock"><div style="padding-left:22px">1:08</div><div>2021/5/</div></div>`;
    }
});
</script>
</body>
</html>
